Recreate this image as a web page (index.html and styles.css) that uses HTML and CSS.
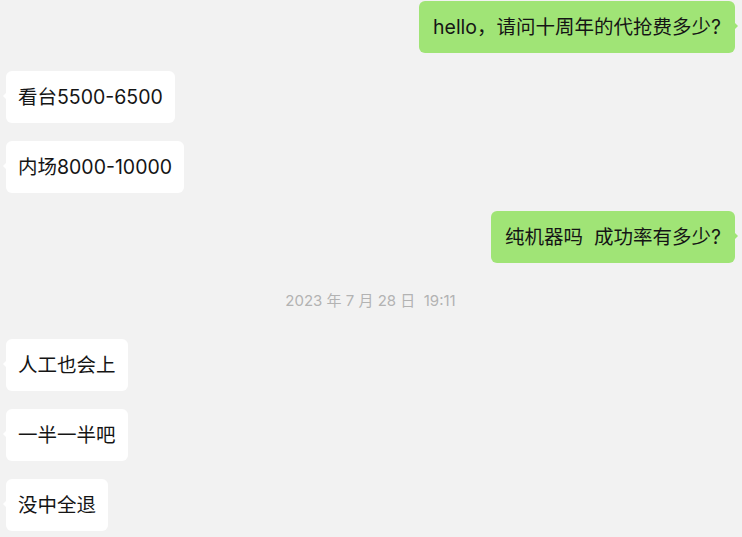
FILE: index.html
```html
<!DOCTYPE html>
<html lang="zh-CN">
<head>
    <meta charset="UTF-8">
    <meta name="viewport" content="width=device-width, initial-scale=1.0">
    <title>聊天记录</title>
    <link rel="stylesheet" href="styles.css">
</head>
<body>
    <div class="chat">
        <div class="row row-me">
            <div class="bubble bubble-me">hello，请问十周年的代抢费多少?</div>
        </div>
        <div class="row row-other">
            <div class="bubble bubble-other">看台5500-6500</div>
        </div>
        <div class="row row-other">
            <div class="bubble bubble-other">内场8000-10000</div>
        </div>
        <div class="row row-me">
            <div class="bubble bubble-me">纯机器吗&nbsp; 成功率有多少?</div>
        </div>

        <div class="time">2023 年 7 月 28 日&nbsp; 19:11</div>

        <div class="row row-other">
            <div class="bubble bubble-other">人工也会上</div>
        </div>
        <div class="row row-other">
            <div class="bubble bubble-other">一半一半吧</div>
        </div>
        <div class="row row-other">
            <div class="bubble bubble-other">没中全退</div>
        </div>
    </div>
</body>
</html>
```

FILE: styles.css
```css
body {
    margin: 0;
    background-color: #f2f2f2;
    font-family: Inter, "Noto Sans CJK SC", sans-serif;
    color: #151515;
}

.chat {
    display: flex;
    flex-direction: column;
    gap: 18px;
    padding: 1px 7px 0 6px;
}

.row {
    display: flex;
}

.row-me {
    justify-content: flex-end;
}

.row-other {
    justify-content: flex-start;
}

.bubble {
    position: relative;
    font-size: 19.5px;
    line-height: 26px;
    padding: 13px 12px;
    border-radius: 6px;
    white-space: nowrap;
}

.bubble-me {
    background-color: #a0e476;
    padding-left: 14px;
    padding-right: 14px;
}

.bubble-other {
    background-color: #ffffff;
}

/* little tails */
.bubble-me::after,
.bubble-other::after {
    content: "";
    position: absolute;
    top: 21px;
    border: 4px solid transparent;
}

.bubble-me::after {
    right: -7px;
    border-left-color: #a0e476;
}

.bubble-other::after {
    left: -7px;
    border-right-color: #ffffff;
}

.time {
    text-align: center;
    font-size: 15px;
    line-height: 20px;
    color: #b3b3b3;
    margin: 10px 0;
}
```
